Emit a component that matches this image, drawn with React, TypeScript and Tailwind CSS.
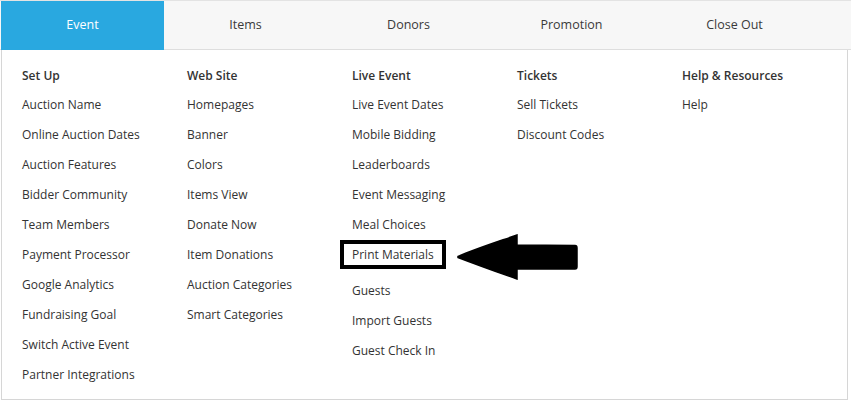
import React from "react";

const tabs = ["Event", "Items", "Donors", "Promotion", "Close Out"];

const columns: { title: string; items: string[] }[] = [
  {
    title: "Set Up",
    items: [
      "Auction Name",
      "Online Auction Dates",
      "Auction Features",
      "Bidder Community",
      "Team Members",
      "Payment Processor",
      "Google Analytics",
      "Fundraising Goal",
      "Switch Active Event",
      "Partner Integrations",
    ],
  },
  {
    title: "Web Site",
    items: [
      "Homepages",
      "Banner",
      "Colors",
      "Items View",
      "Donate Now",
      "Item Donations",
      "Auction Categories",
      "Smart Categories",
    ],
  },
  {
    title: "Live Event",
    items: [
      "Live Event Dates",
      "Mobile Bidding",
      "Leaderboards",
      "Event Messaging",
      "Meal Choices",
      "Print Materials",
      "Guests",
      "Import Guests",
      "Guest Check In",
    ],
  },
  { title: "Tickets", items: ["Sell Tickets", "Discount Codes"] },
  { title: "Help & Resources", items: ["Help"] },
];

export default function App() {
  return (
    <div
      className="relative w-[851px] h-[402px] bg-white text-[#333]"
      style={{ fontFamily: "'Open Sans', 'Noto Sans', sans-serif" }}
    >
      {/* top nav */}
      <div className="flex h-[50px] bg-[#f7f7f7] border-t border-[#e3e3e3] border-b border-b-[#dedede] pl-px">
        {tabs.map((t, i) => (
          <div
            key={t}
            className={
              i === 0
                ? "w-[163px] -mb-px flex items-center justify-center bg-[#29a8e0] text-white text-[12.5px]"
                : "w-[163px] flex items-center justify-center text-[#3a3a3a] text-[12.5px]"
            }
          >
            {t}
          </div>
        ))}
      </div>

      {/* dropdown panel */}
      <div className="ml-px w-[847px] h-[350px] border-l border-r border-b border-[#d6d6d6] flex pl-[20px] pt-[11px]">
        {columns.map((col) => (
          <div key={col.title} className="w-[165px] flex flex-col text-[12px]">
            <div className="h-[29px] flex items-center font-semibold">{col.title}</div>
            {col.items.map((item) => (
              <div
                key={item}
                className={
                  item === "Print Materials"
                    ? "relative h-[30px] mb-[6px] flex items-center"
                    : "h-[30px] flex items-center"
                }
              >
                {item}
                {item === "Print Materials" && (
                  <span className="absolute -left-[12px] top-0 w-[106px] h-[29px] border-4 border-black" />
                )}
              </div>
            ))}
          </div>
        ))}
      </div>

      {/* annotation arrow */}
      <svg
        className="absolute left-[455px] top-[233px]"
        width="125"
        height="48"
        viewBox="0 0 125 48"
      >
        <path
          d="M3 23.5 C 20 16, 45 8, 62 2 L 62 12 L 120 12.5 Q 122 12.5 122 15 L 122 33.5 Q 122 36 120 36 L 62 36 L 62 46 C 45 40, 20 31, 3 24.5 Z"
          fill="black"
          stroke="black"
          strokeWidth="1.5"
          strokeLinejoin="miter"
        />
      </svg>
    </div>
  );
}
